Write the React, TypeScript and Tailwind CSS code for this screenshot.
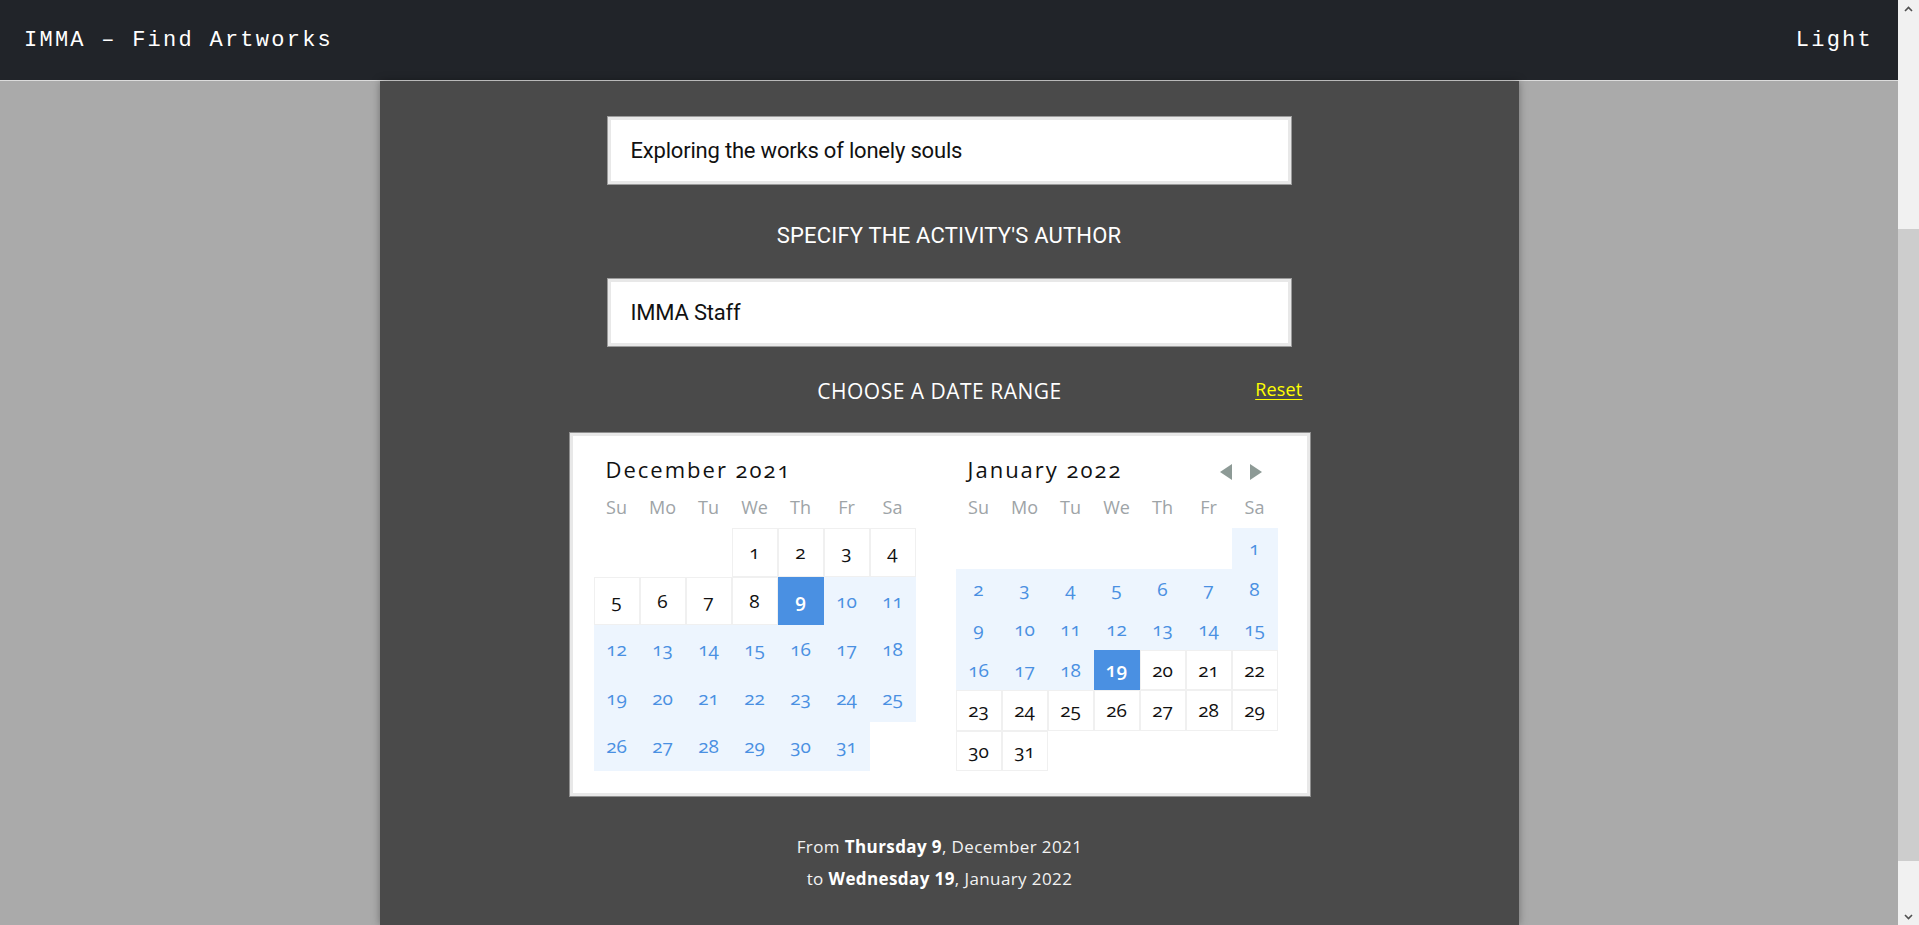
/// Activity form, date-range step: two-month range picker under the
/// description and author fields. The window's scrollbar is drawn as a strip
/// at the right edge, as the browser shows it.

type Kind = "empty" | "plain" | "range" | "sel";

interface Month {
  title: string;
  offset: number;
  rows: number;
  kindOf: (day: number) => Kind;
  arrows?: boolean;
}

const WEEKDAYS = ["Su", "Mo", "Tu", "We", "Th", "Fr", "Sa"];

const MONTHS: Month[] = [
  {
    title: "December 2021",
    offset: 3,
    rows: 5,
    kindOf: (d) => (d < 9 ? "plain" : d === 9 ? "sel" : "range"),
  },
  {
    title: "January 2022",
    offset: 6,
    rows: 6,
    kindOf: (d) => (d < 19 ? "range" : d === 19 ? "sel" : "plain"),
    arrows: true,
  },
];

export default function App() {
  return (
    <div className="h-screen flex overflow-hidden bg-[#aaaaaa]">
      <div className="flex-1 flex flex-col min-w-0">
        <header className="h-[81px] shrink-0 bg-[#212429] border-b border-[#dcdcdc] flex items-center justify-between pl-6 pr-[25px] pt-[1px] font-['Liberation_Mono',monospace] text-[22px] tracking-[2.25px] text-white">
          <span>IMMA – Find Artworks</span>
          <span>Light</span>
        </header>

        <main className="flex-1 w-[1139px] mx-auto bg-[#4a4a4a] shadow-[0_0_8px_rgba(0,0,0,0.35)] flex flex-col pt-[36px]">
          <TextBox>Exploring the works of lonely souls</TextBox>
          <div className="h-[95px] flex items-center justify-center pt-[7px] font-['Roboto',sans-serif] text-[22px] tracking-[0.2px] text-white uppercase">
            Specify the activity's author
          </div>
          <TextBox>IMMA Staff</TextBox>

          <div className="ml-[190px] w-[740px] h-[87px] grid grid-cols-[1fr_auto_1fr] items-center">
            <div />
            <div className="font-['Open_Sans',sans-serif] text-[21px] tracking-[0.5px] text-white uppercase pt-[4px]">
              Choose a date range
            </div>
            <a
              href="#"
              className="justify-self-end mr-[7px] font-['Open_Sans',sans-serif] text-[18px] tracking-[0.2px] text-[#ffff00] underline underline-offset-[3px]"
            >
              Reset
            </a>
          </div>

          <div className="ml-[190px] w-[740px] h-[363px] shrink-0 bg-white border-[3px] border-[#e8e8e8] shadow-[0_0_0_1px_#8f8f8f] flex gap-[40px] px-[21px] pt-[15px] font-['Open_Sans',sans-serif]">
            {MONTHS.map((m) => (
              <MonthGrid key={m.title} month={m} />
            ))}
          </div>

          <div className="ml-[190px] w-[740px] mt-[35px] text-center font-['Open_Sans',sans-serif] text-[17px] tracking-[0.4px] leading-[32px] text-[#f2f2f2]">
            <div>
              From <b className="font-bold text-white">Thursday 9</b>, December
              2021
            </div>
            <div>
              to <b className="font-bold text-white">Wednesday 19</b>, January
              2022
            </div>
          </div>
        </main>
      </div>

      <ScrollStrip />
    </div>
  );
}

function TextBox({ children }: { children: React.ReactNode }) {
  return (
    <div className="mx-auto w-[683px] h-[67px] shrink-0 bg-white border-[3px] border-[#e8e8e8] shadow-[0_0_0_1px_#9b9b9b] flex items-center pl-[20px] font-['Roboto',sans-serif] text-[22px] tracking-[-0.2px] text-[#111]">
      {children}
    </div>
  );
}

function ScrollStrip() {
  return (
    <div className="w-[21px] shrink-0 h-screen bg-[#f1f1f1] flex flex-col">
      <div className="h-[17px] flex items-center justify-center">
        <svg width="9" height="6" viewBox="0 0 9 6">
          <polyline
            points="1,5 4.5,1.5 8,5"
            fill="none"
            stroke="#505050"
            strokeWidth="1.6"
          />
        </svg>
      </div>
      <div className="flex-1">
        <div className="mt-[212px] h-[632px] bg-[#cdcdcd]" />
      </div>
      <div className="h-[17px] flex items-center justify-center">
        <svg width="9" height="6" viewBox="0 0 9 6">
          <polyline
            points="1,1 4.5,4.5 8,1"
            fill="none"
            stroke="#505050"
            strokeWidth="1.6"
          />
        </svg>
      </div>
    </div>
  );
}

function MonthGrid({ month }: { month: Month }) {
  const cells: { day: number | null; kind: Kind }[] = [];
  for (let i = 0; i < month.rows * 7; i++) {
    const day = i - month.offset + 1;
    if (day < 1 || day > 31) cells.push({ day: null, kind: "empty" });
    else cells.push({ day, kind: month.kindOf(day) });
  }

  return (
    <div className="w-[322px] flex flex-col">
      <div className="h-[36px] flex items-center justify-between pl-[12px] pr-[16px]">
        <span className="text-[22px] tracking-[2px] text-[#111] oldstyle-nums">
          {month.title}
        </span>
        {month.arrows && (
          <div className="flex items-center gap-[18px] pt-[6px]">
            <svg width="12" height="16" viewBox="0 0 12 16">
              <polygon points="12,0 12,16 0,8" fill="#8d9a96" />
            </svg>
            <svg width="12" height="16" viewBox="0 0 12 16">
              <polygon points="0,0 0,16 12,8" fill="#8d9a96" />
            </svg>
          </div>
        )}
      </div>

      <div className="h-[41px] grid grid-cols-[repeat(7,46px)] items-center text-center text-[18px] text-[#9ea4a7]">
        {WEEKDAYS.map((w) => (
          <span key={w}>{w}</span>
        ))}
      </div>

      <div
        className={
          month.rows === 5
            ? "h-[243px] grid grid-cols-[repeat(7,46px)] grid-rows-5"
            : "h-[243px] grid grid-cols-[repeat(7,46px)] grid-rows-6"
        }
      >
        {cells.map((c, i) => (
          <DayCell key={i} day={c.day} kind={c.kind} />
        ))}
      </div>
    </div>
  );
}

function DayCell({ day, kind }: { day: number | null; kind: Kind }) {
  if (kind === "empty") return <div />;
  const look =
    kind === "sel"
      ? "bg-[#4a90e2] text-white font-semibold"
      : kind === "range"
        ? "bg-[#edf5fe] text-[#4a90e2]"
        : "bg-white text-[#111] border border-[#f0f0f0]";
  return (
    <div
      className={`flex items-center justify-center text-[19px] oldstyle-nums ${look}`}
    >
      {day}
    </div>
  );
}
